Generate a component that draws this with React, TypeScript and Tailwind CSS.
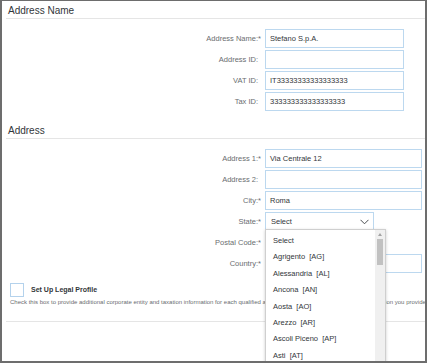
import React from "react";

type Field = { label: string; required?: boolean; value?: string; width: string };

const nameFields: Field[] = [
  { label: "Address Name:", required: true, value: "Stefano S.p.A.", width: "w-[139px]" },
  { label: "Address ID:", width: "w-[139px]" },
  { label: "VAT ID:", value: "IT33333333333333333", width: "w-[139px]" },
  { label: "Tax ID:", value: "333333333333333333", width: "w-[139px]" },
];

const states = [
  "Select",
  "Agrigento  [AG]",
  "Alessandria  [AL]",
  "Ancona  [AN]",
  "Aosta  [AO]",
  "Arezzo  [AR]",
  "Ascoli Piceno  [AP]",
  "Asti  [AT]",
  "Avellino  [AV]",
];

function Label({ text, required }: { text: string; required?: boolean }) {
  return (
    <div className="flex w-[259px] shrink-0 items-center text-[7.5px] text-[#6a6d70]">
      <span className="w-[252px] text-right">{text}</span>
      <span className="w-[5px]">{required ? "*" : ""}</span>
    </div>
  );
}

function Row({ label, required, value, width }: Field) {
  return (
    <div className="flex h-[19px] items-center">
      <Label text={label} required={required} />
      <div
        className={`${width} flex h-[19px] items-center border border-[#bcd8ef] px-[4px] text-[7.5px] text-[#32363a]`}
      >
        {value}
      </div>
    </div>
  );
}

function Heading({ children }: { children: React.ReactNode }) {
  return (
    <h2 className="border-b border-[#e5e5e5] pl-[2px] text-[10px] leading-[14px] text-[#32363a]">
      {children}
    </h2>
  );
}

export default function App() {
  return (
    <div className="relative h-[363px] w-[427px] overflow-hidden border-t border-r-2 border-b-2 border-l-2 border-[#6d6d6d] bg-white font-['Liberation_Sans',Arial,sans-serif]">
      <div className="pl-[4px] pt-[3px]">
        {/* Address name section */}
        <Heading>Address Name</Heading>
        <div className="mt-[10px] flex flex-col gap-[2px]">
          {nameFields.map((f) => (
            <Row key={f.label} {...f} />
          ))}
        </div>

        {/* Address section */}
        <div className="mt-[13px]">
          <Heading>Address</Heading>
        </div>
        <div className="mt-[10px] flex flex-col gap-[2px]">
          <Row label="Address 1:" required value="Via Centrale 12" width="w-[157px]" />
          <Row label="Address 2:" width="w-[157px]" />
          <Row label="City:" required value="Roma" width="w-[157px]" />
          <div className="flex h-[19px] items-center">
            <Label text="State:" required />
            <div className="flex h-[19px] w-[109px] items-center justify-between border border-[#bcd8ef] pl-[5px] pr-[4px] text-[7.5px] text-[#32363a]">
              <span>Select</span>
              <svg width="9" height="6" viewBox="0 0 9 6" fill="none">
                <polyline points="0.5,0.8 4.5,4.8 8.5,0.8" stroke="#4a4d50" strokeWidth="1" />
              </svg>
            </div>
          </div>
          <Row label="Postal Code:" required width="w-[110px]" />
          <Row label="Country:" required width="w-[157px]" />
        </div>

        {/* Legal profile */}
        <div className="mt-[10px] flex items-center pl-[4px]">
          <div className="h-[14px] w-[14px] border border-[#b4d2ec] bg-white" />
          <span className="ml-[7px] text-[7px] font-bold text-[#32363a]">Set Up Legal Profile</span>
        </div>
        <p className="mt-[1px] overflow-hidden whitespace-nowrap pl-[4px] text-[6px] leading-[8px] text-[#6a6d70]">
          Check this box to provide additional corporate entity and taxation information for each qualified address
          and location. The legal entity information you provide is used on invoices.
        </p>
        <div className="mt-[15px] border-b border-[#e5e5e5]" />
      </div>

      {/* State dropdown list */}
      <div className="absolute left-[263px] top-[228px] h-[140px] w-[121px] border border-[#cfcfcf] bg-white shadow-[0_1px_3px_rgba(0,0,0,0.2)]">
        <ul className="pt-[3px] pl-[7px] text-[7.5px] leading-[16.4px] text-[#32363a]">
          {states.map((s) => (
            <li key={s} className="whitespace-pre">
              {s}
            </li>
          ))}
        </ul>
        <div className="absolute right-0 top-0 bottom-0 w-[10px] bg-[#f0f0f0]">
          <svg className="absolute left-[3px] top-[3px]" width="4" height="3" viewBox="0 0 4 3">
            <polygon points="0,3 2,0 4,3" fill="#a3a3a3" />
          </svg>
          <div className="absolute left-[2px] top-[9px] h-[26px] w-[6px] bg-[#c1c1c1]" />
        </div>
      </div>
    </div>
  );
}
